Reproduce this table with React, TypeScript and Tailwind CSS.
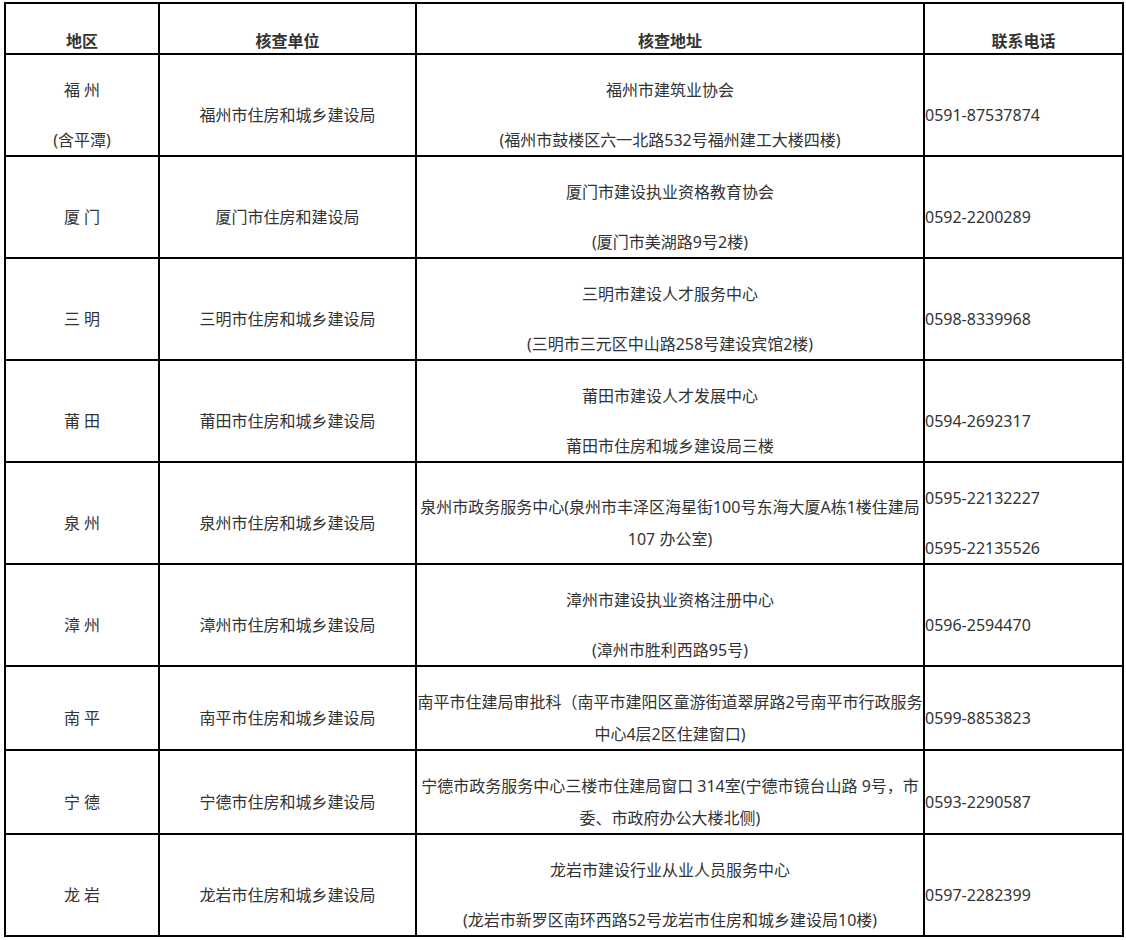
import React from "react";

type Row = {
  region: React.ReactNode;
  unit: string;
  addr: React.ReactNode;
  phone: React.ReactNode;
  h: "tall" | "short";
};

const P = ({ children }: { children: React.ReactNode }) => (
  <div className="leading-[32px] whitespace-nowrap">{children}</div>
);

const Two = ({ a, b }: { a: React.ReactNode; b: React.ReactNode }) => (
  <div className="flex flex-col gap-[18px]">
    <P>{a}</P>
    <P>{b}</P>
  </div>
);

const Wrap = ({ a, b }: { a: React.ReactNode; b: React.ReactNode }) => (
  <div className="flex flex-col">
    <P>{a}</P>
    <P>{b}</P>
  </div>
);

const rows: Row[] = [
  {
    region: <Two a="福 州" b="(含平潭)" />,
    unit: "福州市住房和城乡建设局",
    addr: <Two a="福州市建筑业协会" b="(福州市鼓楼区六一北路532号福州建工大楼四楼)" />,
    phone: <P>0591-87537874</P>,
    h: "tall",
  },
  {
    region: <P>厦 门</P>,
    unit: "厦门市住房和建设局",
    addr: <Two a="厦门市建设执业资格教育协会" b="(厦门市美湖路9号2楼)" />,
    phone: <P>0592-2200289</P>,
    h: "tall",
  },
  {
    region: <P>三 明</P>,
    unit: "三明市住房和城乡建设局",
    addr: <Two a="三明市建设人才服务中心" b="(三明市三元区中山路258号建设宾馆2楼)" />,
    phone: <P>0598-8339968</P>,
    h: "tall",
  },
  {
    region: <P>莆 田</P>,
    unit: "莆田市住房和城乡建设局",
    addr: <Two a="莆田市建设人才发展中心" b="莆田市住房和城乡建设局三楼" />,
    phone: <P>0594-2692317</P>,
    h: "tall",
  },
  {
    region: <P>泉 州</P>,
    unit: "泉州市住房和城乡建设局",
    addr: (
      <Wrap
        a="泉州市政务服务中心(泉州市丰泽区海星街100号东海大厦A栋1楼住建局"
        b="107 办公室)"
      />
    ),
    phone: <Two a="0595-22132227" b="0595-22135526" />,
    h: "tall",
  },
  {
    region: <P>漳 州</P>,
    unit: "漳州市住房和城乡建设局",
    addr: <Two a="漳州市建设执业资格注册中心" b="(漳州市胜利西路95号)" />,
    phone: <P>0596-2594470</P>,
    h: "tall",
  },
  {
    region: <P>南 平</P>,
    unit: "南平市住房和城乡建设局",
    addr: (
      <Wrap
        a="南平市住建局审批科（南平市建阳区童游街道翠屏路2号南平市行政服务"
        b="中心4层2区住建窗口)"
      />
    ),
    phone: <P>0599-8853823</P>,
    h: "short",
  },
  {
    region: <P>宁 德</P>,
    unit: "宁德市住房和城乡建设局",
    addr: (
      <Wrap
        a="宁德市政务服务中心三楼市住建局窗口 314室(宁德市镜台山路 9号，市"
        b="委、市政府办公大楼北侧)"
      />
    ),
    phone: <P>0593-2290587</P>,
    h: "short",
  },
  {
    region: <P>龙 岩</P>,
    unit: "龙岩市住房和城乡建设局",
    addr: <Two a="龙岩市建设行业从业人员服务中心" b="(龙岩市新罗区南环西路52号龙岩市住房和城乡建设局10楼)" />,
    phone: <P>0597-2282399</P>,
    h: "tall",
  },
];

export default function App() {
  const cell =
    "bg-white flex flex-col justify-center pt-[20px] overflow-visible";
  return (
    <div
      className="w-[1126px] h-[940px] bg-white text-[16px] text-[#333333]"
      style={{ fontFamily: '"Noto Sans", "Noto Sans CJK SC", sans-serif' }}
    >
      <div className="pl-[4px] pt-[2px]">
        <div className="grid w-[1120px] grid-cols-[152px_255px_506px_197px] gap-[2px] bg-black p-[2px]">
          {["地区", "核查单位", "核查地址", "联系电话"].map((t) => (
            <div
              key={t}
              className="bg-white h-[49px] flex items-center justify-center pt-[24px] font-bold text-[#333333]"
            >
              <span className="leading-[24px]">{t}</span>
            </div>
          ))}
          {rows.map((r, i) => {
            const h = r.h === "tall" ? "h-[100px]" : "h-[82px]";
            return (
              <React.Fragment key={i}>
                <div className={`${cell} ${h} items-center text-center`}>{r.region}</div>
                <div className={`${cell} ${h} items-center text-center`}>
                  <P>{r.unit}</P>
                </div>
                <div className={`${cell} ${h} items-center text-center`}>{r.addr}</div>
                <div className={`${cell} ${h} items-start text-left`}>{r.phone}</div>
              </React.Fragment>
            );
          })}
        </div>
      </div>
    </div>
  );
}
